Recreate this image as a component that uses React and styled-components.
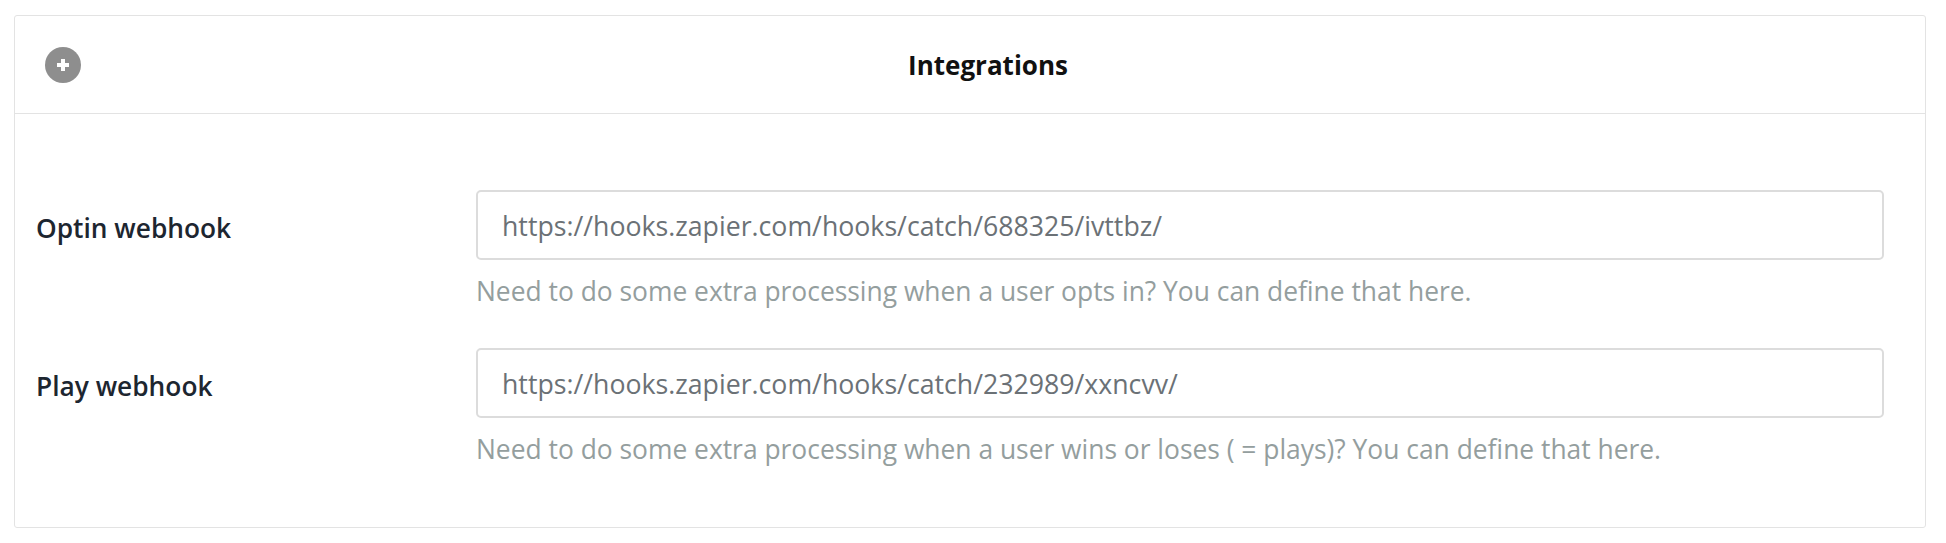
import React from 'react';
import styled, { createGlobalStyle } from 'styled-components';

const GlobalStyle = createGlobalStyle`
  body {
    margin: 0;
    background: #fff;
    font-family: "Open Sans", "Noto Sans", Arial, sans-serif;
  }
`;

const Page = styled.div`
  padding: 15px 20px 0 14px;
`;

const Card = styled.section`
  border: 1px solid #e3e3e3;
  border-radius: 3px;
  background: #fff;
`;

const Header = styled.header`
  display: flex;
  align-items: center;
  height: 97px;
  padding: 0 30px;
  border-bottom: 1px solid #e3e3e3;
`;

const AddButton = styled.button`
  display: flex;
  align-items: center;
  justify-content: center;
  width: 36px;
  height: 36px;
  padding: 0;
  border: none;
  border-radius: 50%;
  background: #8e8e8e;
  cursor: pointer;
`;

const Title = styled.h2`
  flex: 1;
  margin: 0;
  text-align: center;
  font-size: 26px;
  font-weight: 700;
  color: #111;
`;

const Body = styled.div`
  padding: 76px 41px 62px 21px;
  display: flex;
  flex-direction: column;
  gap: 41px;
`;

const Row = styled.div`
  display: grid;
  grid-template-columns: 440px 1fr;
  align-items: start;
`;

const Label = styled.label`
  display: flex;
  align-items: center;
  height: 70px;
  padding-top: 6px;
  box-sizing: border-box;
  font-size: 26.3px;
  font-weight: 600;
  color: #1d2630;
`;

const Field = styled.div`
  display: flex;
  flex-direction: column;
`;

const Input = styled.input`
  box-sizing: border-box;
  width: 100%;
  height: 70px;
  padding: 0 24px;
  border: 2px solid #dcdcdc;
  border-radius: 5px;
  font-family: inherit;
  font-size: 26.7px;
  color: #6b7176;
  outline: none;
`;

const Help = styled.div`
  margin-top: 16px;
  font-size: 26.4px;
  line-height: 31px;
  color: #949e9e;
`;

const PlusIcon = () => (
  <svg width="16" height="16" viewBox="0 0 16 16">
    <path d="M8 2v12M2 8h12" stroke="#fff" strokeWidth="4" />
  </svg>
);

const hooks = [
  {
    id: 'optin',
    label: 'Optin webhook',
    value: 'https://hooks.zapier.com/hooks/catch/688325/ivttbz/',
    help: 'Need to do some extra processing when a user opts in? You can define that here.',
  },
  {
    id: 'play',
    label: 'Play webhook',
    value: 'https://hooks.zapier.com/hooks/catch/232989/xxncvv/',
    help: 'Need to do some extra processing when a user wins or loses ( = plays)? You can define that here.',
  },
];

const App = () => (
  <Page>
    <GlobalStyle />
    <Card>
      <Header>
        <AddButton aria-label="Add integration">
          <PlusIcon />
        </AddButton>
        <Title>Integrations</Title>
      </Header>
      <Body>
        {hooks.map((hook) => (
          <Row key={hook.id}>
            <Label htmlFor={hook.id}>{hook.label}</Label>
            <Field>
              <Input id={hook.id} type="text" defaultValue={hook.value} />
              <Help>{hook.help}</Help>
            </Field>
          </Row>
        ))}
      </Body>
    </Card>
  </Page>
);

export default App;
